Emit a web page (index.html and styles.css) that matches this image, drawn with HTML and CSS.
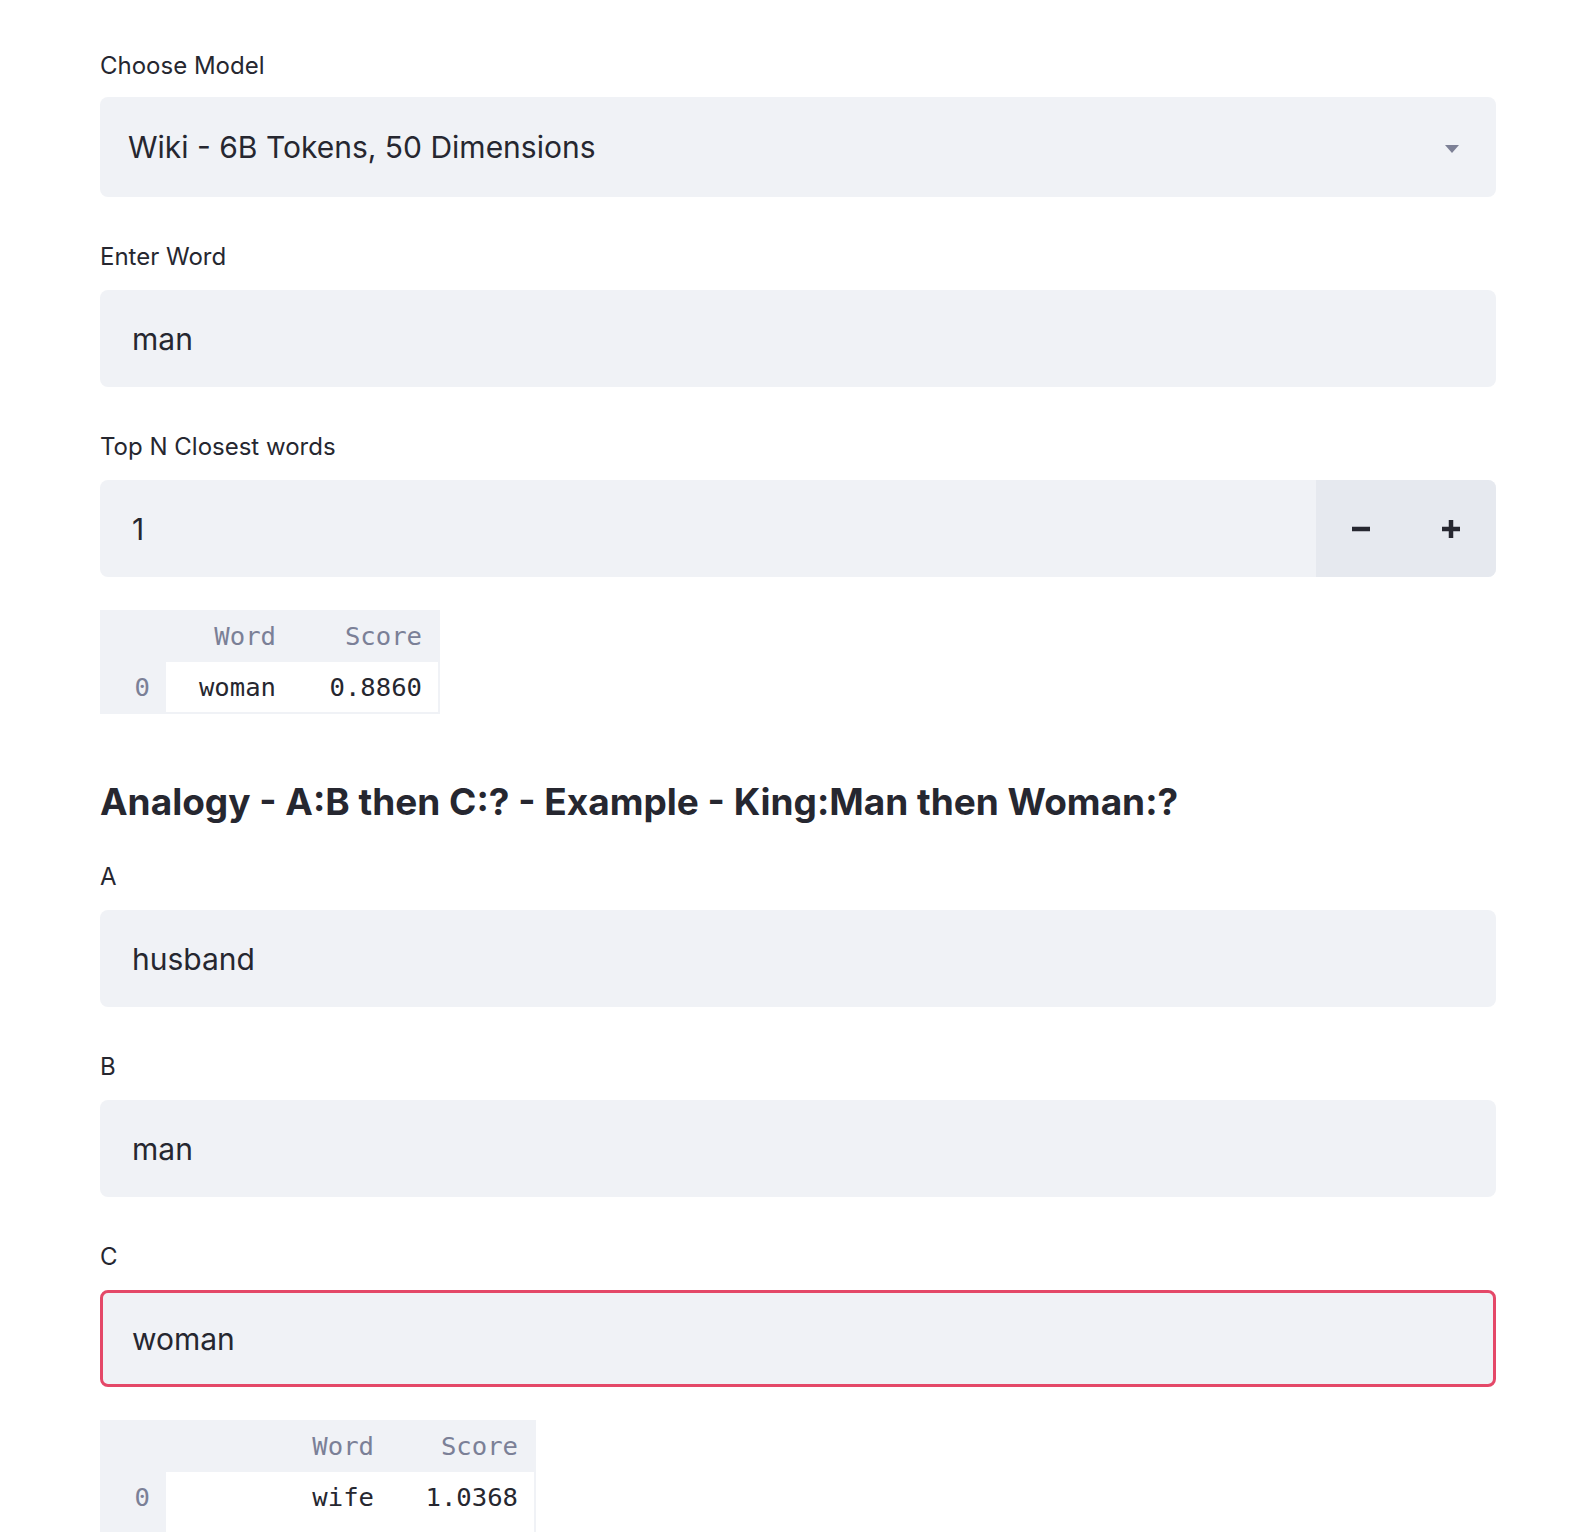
FILE: index.html
```html
<!DOCTYPE html>
<html lang="en">
<head>
<meta charset="utf-8">
<title>Word Vectors</title>
<link rel="stylesheet" href="styles.css">
</head>
<body>
<main class="app">
  <div class="widget">
    <label class="lbl lbl-select">Choose Model</label>
    <div class="select">
      <span class="value">Wiki - 6B Tokens, 50 Dimensions</span>
      <svg class="caret" width="14" height="8" viewBox="0 0 14 8"><path d="M0 0 H14 L7 8 Z" fill="#7d8196"/></svg>
    </div>
  </div>

  <div class="widget">
    <label class="lbl">Enter Word</label>
    <div class="input"><span class="value">man</span></div>
  </div>

  <div class="widget widget-tight">
    <label class="lbl">Top N Closest words</label>
    <div class="number">
      <div class="number-field"><span class="value">1</span></div>
      <div class="steps">
        <button class="step" type="button" aria-label="minus">
          <svg width="20" height="20" viewBox="0 0 20 20"><path d="M1 10 H19" stroke="#262730" stroke-width="4.5"/></svg>
        </button>
        <button class="step" type="button" aria-label="plus">
          <svg width="20" height="20" viewBox="0 0 20 20"><path d="M1 10 H19 M10 1 V19" stroke="#262730" stroke-width="4.5"/></svg>
        </button>
      </div>
    </div>
  </div>

  <div class="table-wrap">
    <table class="df">
      <colgroup><col class="c-idx"><col class="c-word1"><col class="c-score"></colgroup>
      <thead><tr><th></th><th>Word</th><th>Score</th></tr></thead>
      <tbody><tr><th>0</th><td>woman</td><td>0.8860</td></tr></tbody>
    </table>
  </div>

  <h3 class="heading">Analogy - A:B then C:? - Example - King:Man then Woman:?</h3>

  <div class="widget">
    <label class="lbl">A</label>
    <div class="input"><span class="value">husband</span></div>
  </div>

  <div class="widget">
    <label class="lbl">B</label>
    <div class="input"><span class="value">man</span></div>
  </div>

  <div class="widget widget-tight">
    <label class="lbl">C</label>
    <div class="input input-focus"><span class="value">woman</span></div>
  </div>

  <div class="table-wrap">
    <table class="df">
      <colgroup><col class="c-idx"><col class="c-word2"><col class="c-score2"></colgroup>
      <thead><tr><th></th><th>Word</th><th>Score</th></tr></thead>
      <tbody>
        <tr><th>0</th><td>wife</td><td>1.0368</td></tr>
        <tr><th></th><td></td><td></td></tr>
      </tbody>
    </table>
  </div>
</main>
</body>
</html>
```
FILE: styles.css
```css
* { box-sizing: border-box; }

body {
  margin: 0;
  background: #ffffff;
  color: #262730;
  font-family: Inter, "Open Sans", "Liberation Sans", sans-serif;
}

.app {
  width: 1496px;
  padding: 50px 0 40px 100px;
}

.widget { margin-bottom: 44px; }
.widget-tight { margin-bottom: 33px; }

.lbl {
  display: block;
  height: 32px;
  font-size: 24px;
  line-height: 32px;
  margin-bottom: 17px;
  color: #262730;
}
.lbl-select { margin-bottom: 15px; }

.select,
.input,
.number {
  display: flex;
  align-items: center;
  background: #f0f2f6;
  border-radius: 8px;
  font-size: 30px;
  color: #262730;
}

.select {
  height: 100px;
  padding: 0 37px 0 28px;
  justify-content: space-between;
}
.caret { display: block; margin-top: 4px; }

.input {
  height: 97px;
  border: 3px solid transparent;
  padding-left: 29px;
}
.input-focus { border-color: #e44868; }

.number {
  height: 97px;
  align-items: stretch;
  overflow: hidden;
}
.number-field {
  flex: 1;
  display: flex;
  align-items: center;
  padding-left: 32px;
}
.steps {
  display: flex;
  width: 180px;
  background: #e6e9ef;
}
.step {
  flex: 1;
  border: 0;
  padding: 0;
  background: transparent;
  display: flex;
  align-items: center;
  justify-content: center;
}
.step svg { display: block; }

.table-wrap {
  display: inline-block;
  background: #f0f2f6;
  padding: 0 2px 2px 0;
}
.df {
  border-collapse: collapse;
  table-layout: fixed;
  font-family: "DejaVu Sans Mono", "Liberation Mono", monospace;
  font-size: 25.6px;
}
.c-idx { width: 66px; }
.c-word1 { width: 126px; }
.c-score { width: 146px; }
.c-word2 { width: 224px; }
.c-score2 { width: 144px; }

.df th,
.df td {
  text-align: right;
  padding: 0 16px 0 0;
  font-weight: 400;
  white-space: nowrap;
}
.df thead th {
  height: 52px;
  color: #7b8097;
  background: #f0f2f6;
}
.df tbody th {
  height: 50px;
  color: #7b8097;
  background: #f0f2f6;
}
.df tbody td {
  height: 50px;
  background: #ffffff;
  color: #262730;
}

.heading {
  margin: 61px 0 36px;
  font-size: 37px;
  line-height: 46px;
  font-weight: 700;
  color: #262730;
}
```
